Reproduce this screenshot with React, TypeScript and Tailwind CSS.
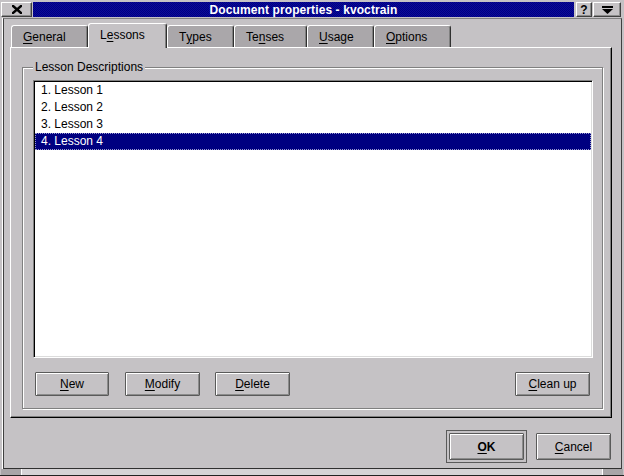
import React from "react";

function Mn({ t, i }: { t: string; i: number }) {
  return (
    <>
      {t.slice(0, i)}
      <span className="underline underline-offset-[2px] decoration-1">{t[i]}</span>
      {t.slice(i + 1)}
    </>
  );
}

function Tab({ label, idx, w, selected }: { label: string; idx: number; w: string; selected?: boolean }) {
  if (selected) {
    return (
      <div
        className={`${w} relative z-10 h-[25px] bg-[#c5c2c5] border-t border-l border-r border-t-white border-l-white border-r-[#303030] rounded-t-[3px] shadow-[inset_-1px_0_0_#808080] pl-[11px] flex items-center pb-[2px] text-[12px] text-black`}
      >
        <Mn t={label} i={idx} />
      </div>
    );
  }
  return (
    <div
      className={`${w} mt-[2px] h-[22px] bg-[#aaa7aa] border-t border-l border-r border-t-white border-l-white border-r-[#303030] rounded-t-[3px] shadow-[inset_-1px_0_0_#808080] pl-[11px] flex items-center text-[12px] text-black`}
    >
      <Mn t={label} i={idx} />
    </div>
  );
}

function Btn({ children, w, cls = "" }: { children: React.ReactNode; w: string; cls?: string }) {
  return (
    <div
      className={`${w} ${cls} h-[24px] border border-[#5a5a5a] rounded-[1px] bg-[#c5c2c5] shadow-[inset_1px_1px_0_white,inset_-1px_-1px_0_#8b8b8b] flex items-center justify-center text-[12px] text-black`}
    >
      {children}
    </div>
  );
}

export default function App() {
  const items = ["1. Lesson 1", "2. Lesson 2", "3. Lesson 3", "4. Lesson 4"];
  return (
    <div
      className="w-[624px] h-[476px] bg-[#c5c2c5] flex flex-col overflow-hidden select-none"
      style={{ fontFamily: '"Liberation Sans", Arial, sans-serif' }}
    >
      {/* Title bar */}
      <div className="h-[18px] flex items-stretch pt-[2px] pb-[1px] pl-[1px] pr-[3px]">
        <div className="w-[31px] bg-[#c5c2c5] border border-t-white border-l-white border-r-[#404040] border-b-[#404040] shadow-[inset_-1px_-1px_0_#8b8b8b] flex items-center justify-center">
          <svg width="10" height="9" viewBox="0 0 10 9">
            <path d="M1 1 L9 8 M9 1 L1 8" stroke="black" strokeWidth="2.4" strokeLinecap="square" />
          </svg>
        </div>
        <div className="flex-1 ml-[1px] bg-[conic-gradient(#000080_25%,#0a0a9a_0_50%,#000080_0_75%,#0a0a9a_0)] bg-[length:2px_2px] flex items-center justify-center">
          <span className="text-white font-bold text-[12px] leading-none tracking-[0.1px]">
            Document properties - kvoctrain
          </span>
        </div>
        <div className="w-[16px] ml-[2px] bg-[#c5c2c5] border border-t-white border-l-white border-r-[#404040] border-b-[#404040] shadow-[inset_-1px_-1px_0_#8b8b8b] flex items-center justify-center text-[12px] font-bold leading-none text-black">
          ?
        </div>
        <div className="w-[28px] ml-[1px] bg-[#c5c2c5] border border-t-white border-l-white border-r-[#404040] border-b-[#404040] shadow-[inset_-1px_-1px_0_#8b8b8b] flex items-center justify-center">
          <svg width="11" height="8" viewBox="0 0 11 8">
            <rect x="0" y="0" width="11" height="2" fill="black" />
            <polygon points="0,3 11,3 5.5,8" fill="black" />
          </svg>
        </div>
      </div>

      {/* Content */}
      <div className="h-[451px] ml-[3px] mr-[2px] border border-t-[#808080] border-l-[#404040] border-r-[#404040] border-b-[#303030] shadow-[-1px_0_0_white] flex flex-col pt-[4px]">
        {/* Tab bar */}
        <div className="h-[24px] ml-[6px] pl-[1px] flex items-start">
          <Tab label="General" idx={0} w="w-[77px]" />
          <Tab label="Lessons" idx={1} w="w-[79px]" selected />
          <Tab label="Types" idx={1} w="w-[67px]" />
          <Tab label="Tenses" idx={2} w="w-[73px]" />
          <Tab label="Usage" idx={0} w="w-[67px]" />
          <Tab label="Options" idx={0} w="w-[77px]" />
        </div>

        {/* Panel */}
        <div className="w-[602px] h-[371px] ml-[6px] border border-t-white border-l-white border-r-black border-b-black shadow-[inset_-1px_-1px_0_#808080] pl-[11px] pr-[8px] pt-[19px] pb-[8px] flex flex-col">
          <div className="relative flex-1 border border-[#808080] shadow-[1px_1px_0_white,inset_1px_1px_0_white] pl-[10px] pr-[9px] pt-[12px] pb-[12px] flex flex-col">
            <div className="absolute -top-[8px] left-[10px] px-[2px] bg-[#c5c2c5] text-[12px] leading-[14px] text-black">
              Lesson Descriptions
            </div>
            <div className="flex-1 bg-white border border-t-[#808080] border-l-[#808080] border-r-white border-b-white shadow-[inset_1px_1px_0_black,inset_-1px_-1px_0_#dcdcdc] p-[1px] flex flex-col">
              {items.map((it, i) =>
                i === 3 ? (
                  <div
                    key={it}
                    className="h-[17px] flex items-center pl-[6px] pb-[2px] text-[12px] bg-[#000080] text-white outline outline-1 outline-dotted outline-[#9a9ad0] -outline-offset-1"
                  >
                    {it}
                  </div>
                ) : (
                  <div key={it} className="h-[17px] flex items-center pl-[6px] pb-[2px] text-[12px] text-black">
                    {it}
                  </div>
                )
              )}
            </div>
            <div className="mt-[14px] h-[24px] flex items-center">
              <Btn w="w-[74px]" cls="ml-[2px]">
                <Mn t="New" i={0} />
              </Btn>
              <Btn w="w-[75px]" cls="ml-[16px]">
                <Mn t="Modify" i={0} />
              </Btn>
              <Btn w="w-[75px]" cls="ml-[15px]">
                <Mn t="Delete" i={0} />
              </Btn>
              <Btn w="w-[75px]" cls="ml-auto mr-[3px]">
                <Mn t="Clean up" i={0} />
              </Btn>
            </div>
          </div>
        </div>

        {/* Bottom buttons */}
        <div className="mt-[12px] h-[33px] flex items-center justify-end pr-[10px]">
          <div className="border border-[#5a5a5a] p-[2px]">
            <div className="w-[75px] h-[27px] border border-[#5a5a5a] rounded-[1px] bg-[#c5c2c5] shadow-[inset_1px_1px_0_white,inset_-1px_-1px_0_#8b8b8b] flex items-center justify-center text-[12px] font-bold text-black">
              <Mn t="OK" i={0} />
            </div>
          </div>
          <div className="ml-[9px] w-[75px] h-[27px] border border-[#5a5a5a] rounded-[1px] bg-[#c5c2c5] shadow-[inset_1px_1px_0_white,inset_-1px_-1px_0_#8b8b8b] flex items-center justify-center text-[12px] text-black">
            <Mn t="Cancel" i={0} />
          </div>
        </div>
      </div>

      {/* Bottom handle bar */}
      <div className="h-[7px] flex border-b border-b-[#222222] px-[1px]">
        <div className="w-[20px] bg-[#a8a5a8]" />
        <div className="w-px bg-white" />
        <div className="flex-1 bg-[#d6d3d6]" />
        <div className="w-px bg-white" />
        <div className="w-[20px] bg-[#a8a5a8]" />
      </div>
    </div>
  );
}
